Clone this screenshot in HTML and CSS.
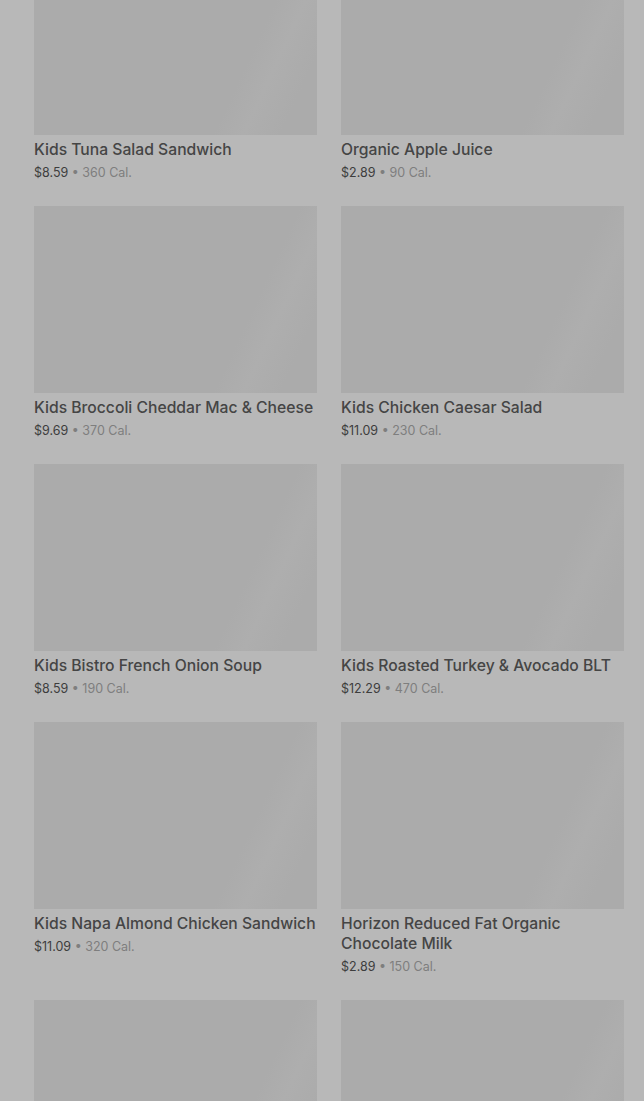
FILE: index.html
```html
<!DOCTYPE html>
<html lang="en">
<head>
    <meta charset="UTF-8">
    <meta name="viewport" content="width=device-width, initial-scale=1.0">
    <title>Kids Menu</title>
    <link rel="stylesheet" href="styles.css">
</head>
<body>
    <div class="menu-grid">
        <div class="item">
            <div class="item-img"></div>
            <h3 class="item-name">Kids Tuna Salad Sandwich</h3>
            <p class="item-meta"><span class="price">$8.59</span> • 360 Cal.</p>
        </div>
        <div class="item">
            <div class="item-img"></div>
            <h3 class="item-name">Organic Apple Juice</h3>
            <p class="item-meta"><span class="price">$2.89</span> • 90 Cal.</p>
        </div>
        <div class="item">
            <div class="item-img"></div>
            <h3 class="item-name">Kids Broccoli Cheddar Mac &amp; Cheese</h3>
            <p class="item-meta"><span class="price">$9.69</span> • 370 Cal.</p>
        </div>
        <div class="item">
            <div class="item-img"></div>
            <h3 class="item-name">Kids Chicken Caesar Salad</h3>
            <p class="item-meta"><span class="price">$11.09</span> • 230 Cal.</p>
        </div>
        <div class="item">
            <div class="item-img"></div>
            <h3 class="item-name">Kids Bistro French Onion Soup</h3>
            <p class="item-meta"><span class="price">$8.59</span> • 190 Cal.</p>
        </div>
        <div class="item">
            <div class="item-img"></div>
            <h3 class="item-name">Kids Roasted Turkey &amp; Avocado BLT</h3>
            <p class="item-meta"><span class="price">$12.29</span> • 470 Cal.</p>
        </div>
        <div class="item">
            <div class="item-img"></div>
            <h3 class="item-name">Kids Napa Almond Chicken Sandwich</h3>
            <p class="item-meta"><span class="price">$11.09</span> • 320 Cal.</p>
        </div>
        <div class="item">
            <div class="item-img"></div>
            <h3 class="item-name">Horizon Reduced Fat Organic Chocolate Milk</h3>
            <p class="item-meta"><span class="price">$2.89</span> • 150 Cal.</p>
        </div>
        <div class="item">
            <div class="item-img"></div>
        </div>
        <div class="item">
            <div class="item-img"></div>
        </div>
    </div>
</body>
</html>
```

FILE: styles.css
```css
/* General Styles */
body {
    font-family: Inter, "Liberation Sans", sans-serif;
    background: #b8b8b8;
    margin: 0;
    padding: 0;
    overflow: hidden;
}

/* Grid (page is scrolled, first row partly hidden) */
.menu-grid {
    display: grid;
    grid-template-columns: 283px 283px;
    column-gap: 24px;
    row-gap: 23px;
    padding: 0 20px 0 34px;
    margin-top: -52px;
}

/* Item */
.item-img {
    height: 187px;
    background: linear-gradient(115deg, #ababab 72%, #aeaeae 80%, #ababab 90%);
}

.item-name {
    margin: 5px 0 0;
    font-size: 15.7px;
    font-weight: 500;
    line-height: 20px;
    color: #454545;
}

.item-meta {
    margin: 3px 0 0;
    font-size: 12.5px;
    line-height: 20px;
    color: #7e7e7e;
}

.price {
    color: #3d3d3d;
}
```
